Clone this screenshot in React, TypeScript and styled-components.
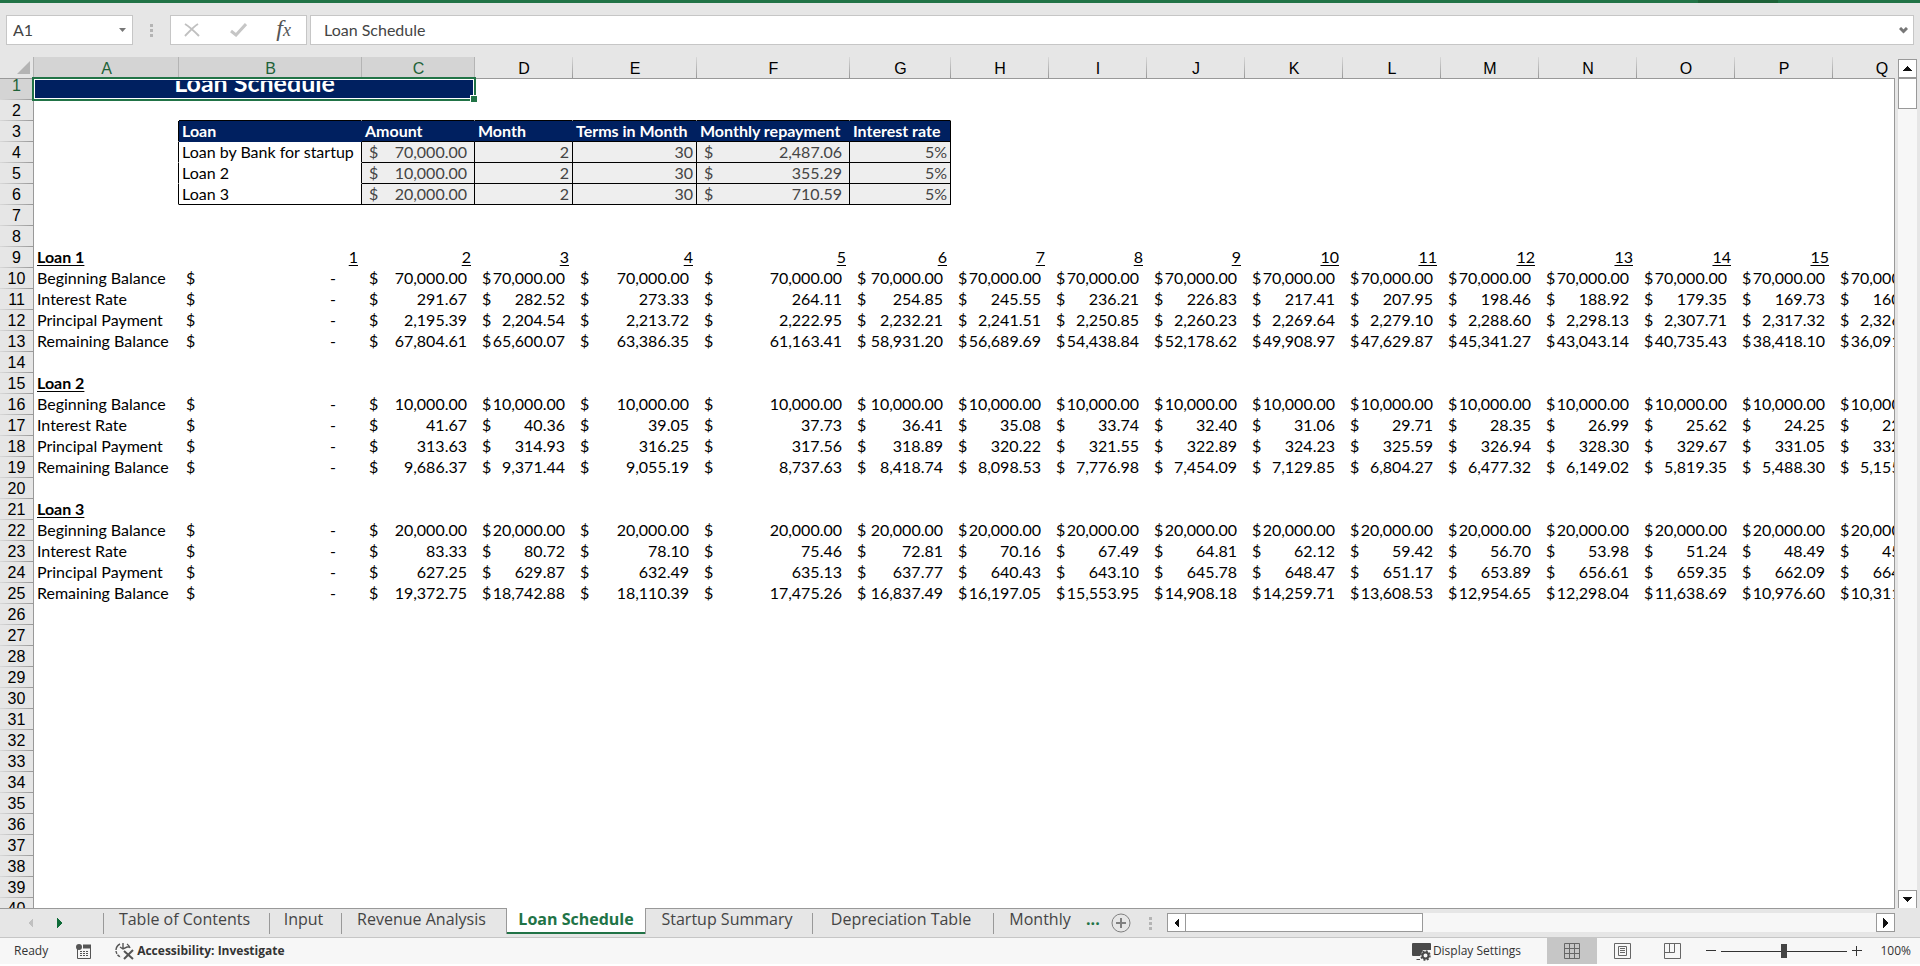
import React from "react";
import styled, { createGlobalStyle, css } from "styled-components";

const GREEN = "#217346";
const NAVY = "#002060";
const CHROME = "#e6e6e6";
const LINE = "#999999";
const UI = '"Open Sans", "Noto Sans", sans-serif';
const CELL = 'Lato, "Open Sans", sans-serif';
const HEAD = '"Liberation Sans", Arial, sans-serif';

const GlobalStyle = createGlobalStyle`
  * { box-sizing: border-box; }
  body { margin: 0; background: #ffffff; overflow: hidden; }
  button, input { font: inherit; color: inherit; margin: 0; }
  button { padding: 0; border: 0; background: none; cursor: pointer; }
`;

const Window = styled.div`
  display: flex;
  flex-direction: column;
  height: 100vh;
  padding-bottom: 2px;
  font-family: ${UI};
`;

/* ---------- formula bar ---------- */

const TitleEdge = styled.div`
  display: flex;
  justify-content: flex-end;
  flex: none;
  height: 3px;
  padding-right: 142px;
  background: ${GREEN};
`;

const TitleShade = styled.div`
  width: 80px;
  background: #1e6238;
`;

const FormulaBar = styled.div`
  display: flex;
  flex: none;
  height: 54px;
  padding: 12px 6px;
  background: ${CHROME};
  font-family: ${CELL};
  font-size: 16px;
  color: #444444;
`;

const Box = styled.div`
  display: flex;
  align-items: center;
  border: 1px solid #c6c6c6;
  background: #ffffff;
`;

const NameBox = styled(Box)`
  width: 127px;
  padding: 0 6px;
`;

const FunctionBox = styled(Box)`
  width: 137px;
  margin-right: 3px;
  justify-content: space-between;
  padding: 0 15px 0 13px;
`;

const FormulaBox = styled(Box)`
  flex: 1;
  padding: 0 5px 0 13px;
`;

const BarInput = styled.input`
  flex: 1;
  min-width: 0;
  padding: 0 0 2px;
  border: 0;
  outline: 0;
  background: none;
`;

const IconButton = styled.button`
  display: flex;
  align-items: center;
  justify-content: center;
`;

const FxLabel = styled.span`
  padding-bottom: 2px;
  font: italic 24px/24px "Liberation Serif", serif;
  color: #555555;

  small {
    font-size: 18px;
  }
`;

const Grip = styled.div<{ $gap: number }>`
  display: flex;
  flex: none;
  flex-direction: column;
  align-items: center;
  justify-content: center;
  gap: 2px;
  width: ${(p) => p.$gap}px;

  i {
    width: 3px;
    height: 3px;
    background: #b4b4b4;
  }
`;

/* ---------- worksheet ---------- */

const SheetArea = styled.div`
  display: flex;
  flex: 1;
  min-height: 0;
  padding-right: 3px;
  background: ${CHROME};
`;

const Viewport = styled.div`
  flex: 1;
  min-width: 0;
  overflow: hidden;
  background: #ffffff;
`;

const SheetEdge = styled.div`
  width: 1px;
  margin: 21px 3px 0 0;
  background: ${LINE};
`;

const Grid = styled.table`
  table-layout: fixed;
  width: 1930px;
  border-collapse: separate;
  border-spacing: 0;
  font: 16px/20px ${CELL};
  color: #000000;
`;

const Col = styled.col<{ $w: number }>`
  width: ${(p) => p.$w}px;
`;

const Corner = styled.td`
  height: 22px;
  padding: 0;
  border-right: 1px solid #b4b4b4;
  border-bottom: 1px solid ${LINE};
  background: ${CHROME};

  svg {
    display: block;
    margin: 0 3px 0 auto;
  }
`;

const ColumnHead = styled.th<{ $on: boolean }>`
  height: 22px;
  padding: 2px 0 0;
  border-bottom: 1px solid ${LINE};
  background: ${(p) =>
    p.$on
      ? "linear-gradient(#b4b4b4, #b4b4b4) right / 1px 100% no-repeat #d4d4d4"
      : `linear-gradient(#d8d8d8, ${LINE}) right / 1px 100% no-repeat ${CHROME}`};
  font: 16px/19px ${HEAD};
  color: ${(p) => (p.$on ? "#1e6238" : "#000000")};
`;

const RowHead = styled.th<{ $on: boolean }>`
  height: 21px;
  padding: 0;
  border-right: 1px solid ${LINE};
  background: linear-gradient(to right, #d8d8d8, ${LINE}) bottom / 100% 1px no-repeat
    ${(p) => (p.$on ? "#d4d4d4" : CHROME)};
  font: 16px/20px ${HEAD};
  color: ${(p) => (p.$on ? "#1e6238" : "#000000")};
  ${(p) => p.$on && css`line-height: 14px; vertical-align: top;`}
`;

type Look = {
  $fill?: string;
  $ink?: string;
  $right?: boolean;
  $bottom?: boolean;
  $bold?: boolean;
  $underline?: boolean;
  $end?: boolean;
};

const Cell = styled.td<Look>`
  height: 21px;
  padding: 0 3px;
  border: solid transparent;
  border-width: 0 1px 1px 0;
  white-space: nowrap;
  ${(p) => p.$fill && css`background: ${p.$fill};`}
  ${(p) => p.$ink && css`color: ${p.$ink};`}
  ${(p) => p.$right && css`border-right-color: #000000;`}
  ${(p) => p.$bottom && css`border-bottom-color: #000000;`}
  ${(p) => p.$bold && css`font-weight: 700;`}
  ${(p) => p.$end && css`text-align: right;`}
  ${(p) => p.$underline && css`text-decoration: underline 1px; text-underline-offset: 2px;`}
`;

const Accounting = styled.div<{ $dash: boolean }>`
  display: flex;
  justify-content: space-between;
  padding: 0 ${(p) => (p.$dash ? 22 : 4)}px 0 4px;
`;

const TitleCell = styled.td`
  position: relative;
  height: 21px;
  padding: 0;
  background: ${NAVY};
`;

const TitleClip = styled.div`
  display: flex;
  align-items: flex-end;
  justify-content: center;
  height: 18px;
  overflow: hidden;
  font-size: 25px;
  line-height: 34px;
  font-weight: 700;
  color: #ffffff;
`;

const Selection = styled.div`
  position: absolute;
  inset: -2px -1px -1px -2px;
  border: 2px solid ${GREEN};
  box-shadow: inset 0 0 0 1px #ffffff;

  &::after {
    content: "";
    position: absolute;
    right: -3px;
    bottom: -3px;
    width: 6px;
    height: 6px;
    border: solid #ffffff;
    border-width: 1px 0 0 1px;
    background: ${GREEN};
  }
`;

/* ---------- scroll bars ---------- */

const VTrack = styled.div`
  display: flex;
  flex-direction: column;
  width: 19px;
  margin: 2px 0 -1px;
  background: #f7f7f7;
`;

const HTrack = styled.div`
  display: flex;
  flex: 1;
  height: 19px;
  margin-top: 4px;
  background: #f7f7f7;
`;

const ScrollButton = styled.button`
  display: flex;
  flex: none;
  align-items: center;
  justify-content: center;
  width: 19px;
  height: 19px;
  border: 1px solid ${LINE};
  background: #ffffff;
`;

const Thumb = styled.div<{ $w?: number; $h?: number }>`
  flex: none;
  width: ${(p) => p.$w ?? 19}px;
  height: ${(p) => p.$h ?? 19}px;
  border: 1px solid ${LINE};
  ${(p) => p.$w && css`border-left: 0;`}
  background: #ffffff;
`;

const Spring = styled.div`
  flex: 1;
`;

/* ---------- sheet tabs ---------- */

const TabStrip = styled.div`
  flex: none;
  padding-right: 25px;
  background: ${CHROME};
`;

const TabRow = styled.div`
  display: flex;
  height: 29px;
  border-top: 1px solid ${LINE};
`;

const TabArrows = styled.div`
  display: flex;
  flex: none;
  align-items: center;
  justify-content: space-between;
  width: 104px;
  height: 25px;
  padding: 2px 42px 0 28px;
  background: linear-gradient(${LINE}, ${LINE}) right bottom / 1px 21px no-repeat;
`;

const Tab = styled.button<{ $w: number; $active: boolean; $rule: boolean; $inset: boolean }>`
  position: relative;
  flex: none;
  width: ${(p) => p.$w}px;
  height: 25px;
  padding: 0 ${(p) => (p.$inset ? 5 : 0)}px 4px 0;
  font-size: 16px;
  line-height: 21px;
  white-space: nowrap;
  color: #444444;

  ${(p) =>
    p.$rule &&
    css`
      background: linear-gradient(${LINE}, ${LINE}) right bottom / 1px 21px no-repeat;
    `}

  ${(p) =>
    p.$active &&
    css`
      height: 26px;
      margin-top: -1px;
      border: solid ${LINE};
      border-width: 0 1px;
      background: linear-gradient(${GREEN}, ${GREEN}) bottom / 100% 2px no-repeat #ffffff;
      font-weight: 700;
      color: ${GREEN};
    `}
`;

const MoreTabs = styled.button`
  width: 22px;
  height: 21px;
  font-size: 16px;
  line-height: 21px;
  font-weight: 700;
  text-align: left;
  color: ${GREEN};
`;

const AddSheet = styled(IconButton)`
  width: 26px;
  height: 28px;
`;

/* ---------- status bar ---------- */

const StatusBar = styled.div`
  display: flex;
  flex: none;
  align-items: center;
  height: 27px;
  padding: 0 9px 0 14px;
  border-top: 1px solid #c6c6c6;
  background: #f7f7f7;
  font-size: 12px;
  line-height: 16px;
  color: #333333;
`;

const StatusButton = styled.button<{ $left: number; $strong?: boolean }>`
  display: flex;
  align-items: center;
  gap: 2px;
  height: 26px;
  margin-left: ${(p) => p.$left}px;
  white-space: nowrap;
  font-weight: ${(p) => (p.$strong ? 700 : 400)};
`;

const ViewButton = styled(IconButton)<{ $on?: boolean }>`
  width: 50px;
  height: 26px;
  background: ${(p) => (p.$on ? "#c6c6c6" : "none")};
`;

const Views = styled.div`
  display: flex;
  margin: 0 4px 0 26px;
`;

const ZoomStep = styled(IconButton)`
  width: 20px;
  height: 26px;
`;

const ZoomSlider = styled.input`
  width: 126px;
  height: 16px;
  appearance: none;
  background: linear-gradient(#333333, #333333) center / 100% 1px no-repeat;

  &::-webkit-slider-thumb {
    appearance: none;
    width: 6px;
    height: 14px;
    background: #444444;
  }
`;

const ZoomLevel = styled.output`
  width: 44px;
  text-align: right;
`;

/* ---------- data ---------- */

const COLUMNS = "ABCDEFGHIJKLMNOPQ".split("");
const WIDTHS = [145, 183, 113, 98, 124, 153, 101, 98, 98, 98, 98, 98, 98, 98, 98, 98, 98];
const ROW_COUNT = 40;
const MONTHLY_RATE = 0.05 / 12;

type CellData = Look & { text?: string; money?: string };

const cells: Record<string, CellData> = {};

const money = (n: number) =>
  n.toLocaleString("en-US", { minimumFractionDigits: 2, maximumFractionDigits: 2 });

function addSchedule(name: string, top: number, principal: number, numbered: boolean) {
  const payment = (principal * MONTHLY_RATE) / (1 - Math.pow(1 + MONTHLY_RATE, -30));
  cells[`A${top}`] = { text: name, $bold: true, $underline: true };
  ["Beginning Balance", "Interest Rate", "Principal Payment", "Remaining Balance"].forEach((label, i) => {
    cells[`A${top + 1 + i}`] = { text: label };
    cells[`B${top + 1 + i}`] = { money: "-" };
  });
  let balance = principal;
  COLUMNS.slice(1).forEach((col, i) => {
    if (numbered && i < 15) {
      cells[`${col}${top}`] = { text: String(i + 1), $underline: true, $end: true };
    }
    if (i === 0) return;
    const interest = balance * MONTHLY_RATE;
    const paid = payment - interest;
    balance -= paid;
    [principal, interest, paid, balance].forEach((value, k) => {
      cells[`${col}${top + 1 + k}`] = { money: money(value) };
    });
  });
}

addSchedule("Loan 1", 9, 70000, true);
addSchedule("Loan 2", 15, 10000, false);
addSchedule("Loan 3", 21, 20000, false);

["Loan", "Amount", "Month", "Terms in Month", "Monthly repayment", "Interest rate"].forEach((text, i) => {
  const col = COLUMNS[i + 1];
  cells[`${col}2`] = { $bottom: true };
  cells[`${col}3`] = { text, $fill: NAVY, $ink: "#ffffff", $bold: true, $bottom: i > 0, $right: i === 5 };
});
cells.A3 = { $right: true };

[
  ["Loan by Bank for startup", "70,000.00", "2,487.06"],
  ["Loan 2", "10,000.00", "355.29"],
  ["Loan 3", "20,000.00", "710.59"],
].forEach(([name, amount, repayment], i) => {
  const row = 4 + i;
  const input = { $fill: "#eeeeee", $ink: "#444444", $right: true, $bottom: true };
  cells[`A${row}`] = { $right: true };
  cells[`B${row}`] = { text: name, $right: true, $bottom: i === 2 };
  cells[`C${row}`] = { ...input, money: amount };
  cells[`D${row}`] = { ...input, text: "2", $end: true };
  cells[`E${row}`] = { ...input, text: "30", $end: true };
  cells[`F${row}`] = { ...input, money: repayment };
  cells[`G${row}`] = { ...input, text: "5%", $end: true };
});

const TABS = [
  { name: "Table of Contents", width: 166 },
  { name: "Input", width: 72 },
  { name: "Revenue Analysis", width: 164 },
  { name: "Loan Schedule", width: 140 },
  { name: "Startup Summary", width: 167 },
  { name: "Depreciation Table", width: 181 },
  { name: "Monthly", width: 92 },
];

/* ---------- drawings ---------- */

const ARROWS = {
  up: "M4 0 9 5H0z",
  down: "M0 0H9L4 5z",
  left: "M5 0V10L0 5z",
  right: "M0 0V10L5 5z",
};

function Arrow({ dir, color = "#111111" }: { dir: keyof typeof ARROWS; color?: string }) {
  const flat = dir === "up" || dir === "down";
  return (
    <svg width={flat ? 9 : 5} height={flat ? 5 : 10} fill={color} shapeRendering="crispEdges">
      <path d={ARROWS[dir]} />
    </svg>
  );
}

function SheetRow({ row }: { row: number }) {
  return (
    <tr>
      <RowHead scope="row" $on={row === 1}>{row}</RowHead>
      {row === 1 && (
        <TitleCell colSpan={3}>
          <TitleClip>Loan Schedule</TitleClip>
          <Selection />
        </TitleCell>
      )}
      {COLUMNS.slice(row === 1 ? 3 : 0).map((col) => {
        const { text, money: amount, ...look } = cells[`${col}${row}`] ?? {};
        return (
          <Cell key={col} {...look}>
            {amount ? (
              <Accounting $dash={amount === "-"}>
                <span>$</span>
                <span>{amount}</span>
              </Accounting>
            ) : (
              text
            )}
          </Cell>
        );
      })}
    </tr>
  );
}

export default function App() {
  return (
    <Window>
      <GlobalStyle />
      <TitleEdge>
        <TitleShade />
      </TitleEdge>

      <FormulaBar>
        <NameBox>
          <BarInput aria-label="Name box" defaultValue="A1" />
          <IconButton aria-label="Open name list">
            <svg width="7" height="4" fill="#777777">
              <path d="M0 0H7L3.500 4z" />
            </svg>
          </IconButton>
        </NameBox>
        <Grip $gap={37}>
          <i />
          <i />
          <i />
        </Grip>
        <FunctionBox>
          <IconButton aria-label="Cancel">
            <svg width="16" height="14" fill="none" stroke="#c0c0c0" strokeWidth="2">
              <path d="M1 1C6 4 11 9 15 13M14 1C9 4 5 9 1 13" />
            </svg>
          </IconButton>
          <IconButton aria-label="Enter">
            <svg width="17" height="14" fill="none" stroke="#c6c6c6" strokeWidth="3">
              <path d="M1 8 6 12 16 1" />
            </svg>
          </IconButton>
          <IconButton aria-label="Insert function">
            <FxLabel>
              f<small>x</small>
            </FxLabel>
          </IconButton>
        </FunctionBox>
        <FormulaBox>
          <BarInput aria-label="Formula bar" defaultValue="Loan Schedule" />
          <IconButton aria-label="Expand formula bar">
            <svg width="9" height="7" fill="none" stroke="#777777" strokeWidth="3">
              <path d="M1 1 4.500 4.500 8 1" />
            </svg>
          </IconButton>
        </FormulaBox>
      </FormulaBar>

      <SheetArea>
        <Viewport>
          <Grid>
            <colgroup>
              <Col $w={34} />
              {WIDTHS.map((w, i) => (
                <Col key={COLUMNS[i]} $w={w} />
              ))}
            </colgroup>
            <thead>
              <tr>
                <Corner>
                  <svg width="13" height="13" fill="#b4b4b4">
                    <path d="M13 0V13H0z" />
                  </svg>
                </Corner>
                {COLUMNS.map((col, i) => (
                  <ColumnHead key={col} scope="col" $on={i < 3}>{col}</ColumnHead>
                ))}
              </tr>
            </thead>
            <tbody>
              {Array.from({ length: ROW_COUNT }, (_, i) => (
                <SheetRow key={i} row={i + 1} />
              ))}
            </tbody>
          </Grid>
        </Viewport>
        <SheetEdge />
        <VTrack>
          <ScrollButton aria-label="Scroll up">
            <Arrow dir="up" />
          </ScrollButton>
          <Thumb $h={31} />
          <Spring />
          <ScrollButton aria-label="Scroll down">
            <Arrow dir="down" />
          </ScrollButton>
        </VTrack>
      </SheetArea>

      <TabStrip>
        <TabRow>
          <TabArrows>
            <IconButton aria-label="Previous sheet">
              <Arrow dir="left" color="#c0c0c0" />
            </IconButton>
            <IconButton aria-label="Next sheet">
              <Arrow dir="right" color="#0e6b38" />
            </IconButton>
          </TabArrows>
          {TABS.map((tab, i) => (
            <Tab
              key={tab.name}
              $w={tab.width}
              $active={i === 3}
              $rule={[0, 1, 4, 5].includes(i)}
              $inset={i !== 3 && i !== 6}
            >
              {tab.name}
            </Tab>
          ))}
          <MoreTabs aria-label="More sheets">...</MoreTabs>
          <AddSheet aria-label="New sheet">
            <svg width="20" height="20" fill="none" stroke="#808080">
              <circle cx="10" cy="10" r="9" />
              <path d="M5 10H15M10 5V15" strokeWidth="2" />
            </svg>
          </AddSheet>
          <Grip $gap={33}>
            <i />
            <i />
            <i />
          </Grip>
          <HTrack>
            <ScrollButton aria-label="Scroll left">
              <Arrow dir="left" />
            </ScrollButton>
            <Thumb $w={237} />
            <Spring />
            <ScrollButton aria-label="Scroll right">
              <Arrow dir="right" />
            </ScrollButton>
          </HTrack>
        </TabRow>
      </TabStrip>

      <StatusBar>
        <span>Ready</span>
        <StatusButton $left={28} aria-label="Record macro">
          <svg width="15" height="15" fill="none" stroke="#555555">
            <path d="M1.500 5V14.500H14.500V2" />
            <path d="M7 2.500H15" strokeWidth="4" />
            <circle cx="3" cy="3" r="3" fill="#555555" stroke="none" />
            <path d="M4 7.500H6M7 7.500H9M10 7.500H12M4 9.500H6M7 9.500H9M10 9.500H12M4 11.500H6M7 11.500H9M10 11.500H12" />
          </svg>
        </StatusButton>
        <StatusButton $left={24} $strong>
          <svg width="20" height="18" fill="none" stroke="#555555" strokeWidth="1.400">
            <path d="M5 2A7 7 0 0 0 1 8" />
            <path d="M1 9A7 7 0 0 0 6 15" strokeDasharray="3 1" />
            <path d="M12 2A7 7 0 0 1 15 6M8 1V6M5 5 8 7 12 5H14" />
            <path d="M9 9 18 17M18 8 9 17" strokeWidth="2" />
          </svg>
          Accessibility: Investigate
        </StatusButton>
        <Spring />
        <StatusButton $left={0}>
          <svg width="19" height="19" fill="#4a4a4a">
            <path d="M0 2a1 1 0 0 1 1-1H18a1 1 0 0 1 1 1V8H11L8 14H1a1 1 0 0 1-1-1zM5 17H8V18H4z" />
            <circle cx="13.500" cy="13.500" r="3" fill="none" stroke="#4a4a4a" strokeWidth="2" />
            <circle cx="13.500" cy="13.500" r="4.500" fill="none" stroke="#4a4a4a" strokeWidth="1.500" strokeDasharray="2 1.500" />
          </svg>
          Display Settings
        </StatusButton>
        <Views>
          <ViewButton $on aria-label="Normal view">
            <svg width="16" height="16" fill="none" stroke="#666666">
              <path d="M.5.5H15.500V15.500H.5zM5.500.5V15.500M10.500.5V15.500M.5 5.500H15.500M.5 10.500H15.500" />
            </svg>
          </ViewButton>
          <ViewButton aria-label="Page layout view">
            <svg width="17" height="16" fill="none" stroke="#666666">
              <path d="M.5.5H16.500V15.500H.5zM4.500 3.500H12.500V12.500H4.500zM6 5.500H11M6 7.500H11M6 9.500H11" />
            </svg>
          </ViewButton>
          <ViewButton aria-label="Page break preview">
            <svg width="17" height="16" fill="none" stroke="#666666">
              <path d="M.5.5H16.500V15.500H.5zM5.500.5V9.500M10.500.5V9.500M.5 9.500H10.500" />
            </svg>
          </ViewButton>
        </Views>
        <ZoomStep aria-label="Zoom out">
          <svg width="10" height="10" stroke="#333333">
            <path d="M0 4.500H10" />
          </svg>
        </ZoomStep>
        <ZoomSlider type="range" aria-label="Zoom" min={0} max={100} defaultValue={50} />
        <ZoomStep aria-label="Zoom in">
          <svg width="10" height="10" stroke="#333333">
            <path d="M0 4.500H10M4.500 0V10" />
          </svg>
        </ZoomStep>
        <ZoomLevel>100%</ZoomLevel>
      </StatusBar>
    </Window>
  );
}
